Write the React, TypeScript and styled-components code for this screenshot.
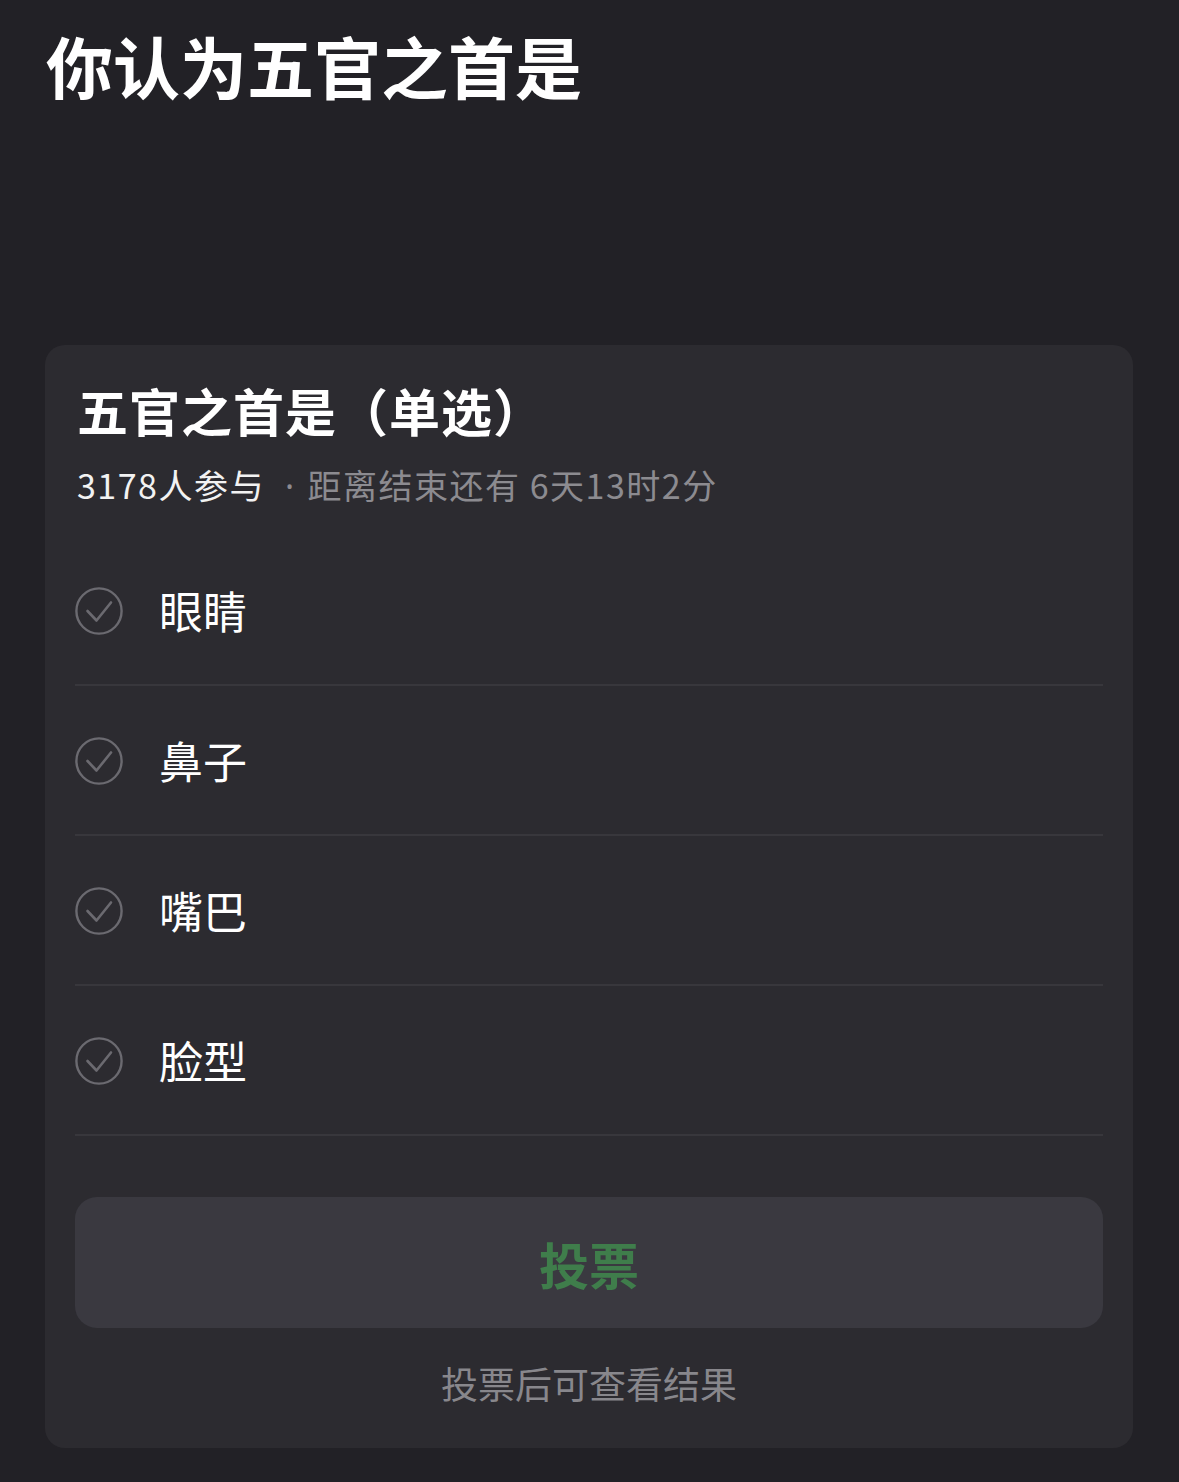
import styled, { createGlobalStyle } from "styled-components";

const GlobalStyle = createGlobalStyle`
  body {
    margin: 0;
    background-color: #222126;
    font-family: "Noto Sans CJK SC", "Noto Sans", sans-serif;
  }
`;

const Page = styled.div`
  width: 1179px;
  min-height: 1482px;
  box-sizing: border-box;
  padding: 21px 46px 34px 45px;
  background-color: #222126;
`;

const Heading = styled.h1`
  margin: 0 0 0 1px;
  font-size: 67px;
  line-height: 88px;
  font-weight: 700;
  color: #ffffff;
`;

const Card = styled.section`
  margin-top: 236px;
  width: 1088px;
  box-sizing: border-box;
  padding: 31px 30px 40px 30px;
  background-color: #2c2b30;
  border-radius: 20px;
`;

const CardTitle = styled.h2`
  margin: 0 0 0 2px;
  font-size: 51px;
  line-height: 68px;
  letter-spacing: 1px;
  font-weight: 700;
  color: #ffffff;
`;

const Meta = styled.div`
  height: 46px;
  margin: 18px 0 0 2px;
  font-size: 34px;
  line-height: 46px;
  letter-spacing: 1.5px;
  color: #8c8b90;
`;

const Count = styled.span`
  color: #f2f2f2;
`;

const Sep = styled.span`
  font-family: "Noto Sans", sans-serif;
  line-height: 1;
  margin: 0 12px 0 20px;
`;

const OptionList = styled.ul`
  list-style: none;
  margin: 28px 0 0;
  padding: 0;
`;

const Option = styled.li`
  display: flex;
  align-items: center;
  gap: 36px;
  height: 150px;
  box-sizing: border-box;
  border-bottom: 2px solid #38373c;
`;

const OptionLabel = styled.span`
  font-size: 44px;
  color: #ffffff;
`;

const CheckIcon = styled.svg`
  flex: none;
  width: 48px;
  height: 48px;
  margin-top: 1px;
`;

const VoteButton = styled.button`
  display: block;
  width: 100%;
  height: 131px;
  margin-top: 61px;
  border: none;
  border-radius: 22px;
  background-color: #3a3940;
  color: #3f7d4b;
  font-family: inherit;
  font-size: 50px;
  font-weight: 700;
  cursor: pointer;
`;

const Footnote = styled.p`
  margin: 30px 0 0;
  text-align: center;
  font-size: 37px;
  line-height: 50px;
  color: #88878c;
`;

const options = ["眼睛", "鼻子", "嘴巴", "脸型"];

function Check() {
  return (
    <CheckIcon viewBox="0 0 48 48" fill="none">
      <circle cx="24" cy="24" r="22.6" stroke="#6b6a70" strokeWidth="2.4" />
      <path
        d="M12.5 24 L21.5 33.5 L36 15.5"
        stroke="#6b6a70"
        strokeWidth="2.6"
        strokeLinecap="round"
        strokeLinejoin="round"
      />
    </CheckIcon>
  );
}

export default function App() {
  return (
    <>
      <GlobalStyle />
      <Page>
        <Heading>你认为五官之首是</Heading>
        <Card>
          <CardTitle>五官之首是（单选）</CardTitle>
          <Meta>
            <Count>3178人参与</Count>
            <Sep>·</Sep>距离结束还有 6天13时2分
          </Meta>
          <OptionList>
            {options.map((item) => (
              <Option key={item}>
                <Check />
                <OptionLabel>{item}</OptionLabel>
              </Option>
            ))}
          </OptionList>
          <VoteButton>投票</VoteButton>
          <Footnote>投票后可查看结果</Footnote>
        </Card>
      </Page>
    </>
  );
}
